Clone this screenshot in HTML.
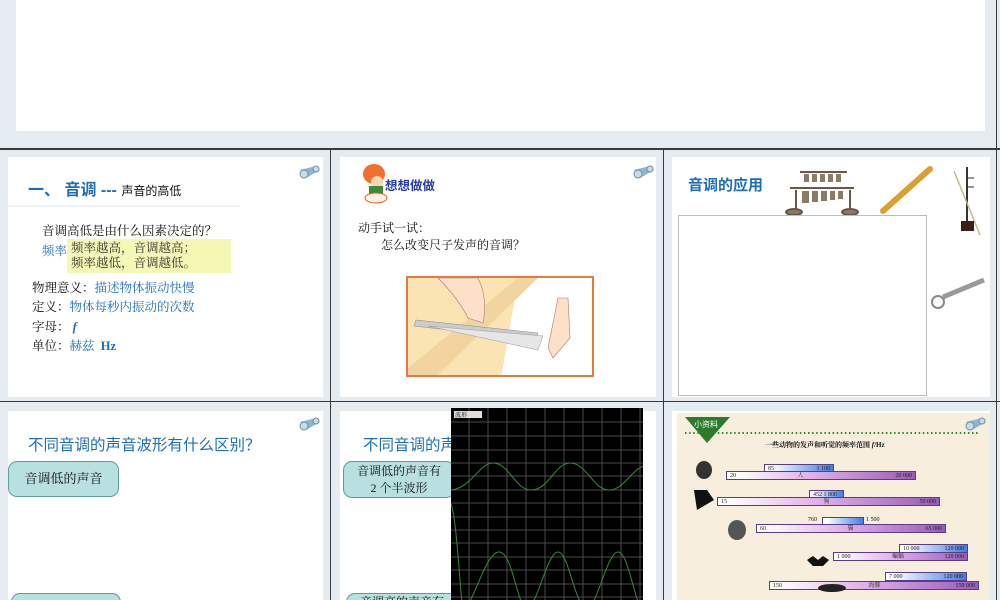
<!DOCTYPE html>
<html style="width:1000px;height:600px;overflow:hidden"><head><meta charset="utf-8"><style>
*{margin:0;padding:0;box-sizing:border-box}
body{width:1000px;height:600px;overflow:hidden;background:#e4ebf1;position:relative;font-family:"Liberation Serif","Noto Serif CJK SC",serif;color:#111}
.a{position:absolute}
.w{position:absolute;background:#fff}
.ln{position:absolute;background:#3a3a3a}
.b{color:#1e6fb8}
.s{font-family:"Liberation Sans","Noto Sans CJK SC",sans-serif}
.box{position:absolute;background:#b9e0e1;border:1px solid #5d9b9d;border-radius:9px;font-size:13px;text-align:center;color:#111}
.bar{position:absolute;height:9px;border:1px solid #5a3a8a;font-size:6px;line-height:8px;color:#222;padding:0 3px}
.p{background:linear-gradient(90deg,#fff 5%,#e6b8ee 40%,#9a5ab8)}
.q{background:linear-gradient(90deg,#fff 10%,#3d7fe0)}
#clip{position:absolute;left:0;top:0;width:1000px;height:600px;overflow:hidden}
</style></head><body><div id="clip">
<div class="w" style="left:16px;top:0;width:969px;height:131px"></div>
<div class="ln" style="left:0;top:148px;width:1000px;height:2px"></div>
<div class="ln" style="left:996px;top:0;width:1px;height:148px"></div>
<div class="ln" style="left:330px;top:150px;width:1px;height:251px"></div>
<div class="ln" style="left:663px;top:150px;width:1px;height:251px"></div>
<div class="ln" style="left:996px;top:150px;width:1px;height:450px"></div>
<div class="ln" style="left:0;top:401px;width:1000px;height:1px"></div>
<div class="ln" style="left:330px;top:402px;width:1px;height:198px"></div>
<div class="ln" style="left:663px;top:402px;width:1px;height:198px"></div>

<div class="w" style="left:8px;top:157px;width:315px;height:240px"></div>
<div class="a" style="left:8px;top:205px;width:232px;height:2px;background:#eef3f8"></div>
<div class="a s b" style="left:28px;top:176px;font-size:16px;font-weight:bold;white-space:nowrap">一、 音调 --- <span style="color:#111;font-size:12px;font-weight:normal">声音的高低</span></div>
<div class="a" style="left:42px;top:221px;font-size:12.5px">音调高低是由什么因素决定的？</div>
<div class="a b" style="left:42px;top:241px;font-size:12.5px">频率</div>
<div class="a" style="left:67px;top:239px;width:164px;height:34px;background:#f5f7b4;font-size:12.5px;line-height:15px;padding:2px 4px;color:#333">频率越高，音调越高；<br>频率越低，音调越低。</div>
<div class="a" style="left:32px;top:279px;font-size:12.5px;line-height:19.3px">物理意义：<span class="b">描述物体振动快慢</span><br>定义：<span class="b">物体每秒内振动的次数</span><br>字母：<span class="b"><i><b>&nbsp;f</b></i></span><br>单位：<span class="b">赫兹 &nbsp;<b>Hz</b></span></div>

<div class="w" style="left:340px;top:157px;width:316px;height:240px"></div>
<svg class="a" style="left:362px;top:162px" width="30" height="42"><ellipse cx="12" cy="12" rx="11" ry="10" fill="#f07030"/><circle cx="15" cy="20" r="6" fill="#f3d6b0"/><rect x="7" y="24" width="14" height="10" fill="#3c8a3c"/><ellipse cx="14" cy="36" rx="11" ry="5" fill="#fff0e0" stroke="#e06030"/></svg>
<div class="a s" style="left:385px;top:175px;font-size:12.5px;font-weight:bold;color:#2a3aa8">想想做做</div>
<div class="a" style="left:358px;top:219px;font-size:12px">动手试一试：</div>
<div class="a" style="left:381px;top:236px;font-size:12px">怎么改变尺子发声的音调？</div>
<div class="a" style="left:406px;top:276px;width:188px;height:101px;border:2px solid #e47a42;background:linear-gradient(100deg,#fbe4b4 55%,#fff 55%);overflow:hidden">
<svg width="184" height="97"><polygon points="0,90 110,0 130,0 30,97 0,97" fill="#f1d4a0"/><polygon points="8,42 130,55 128,62 6,48" fill="#ccc" stroke="#888" stroke-width=".5"/><polygon points="20,48 135,58 130,72" fill="#e6e6e6" stroke="#999" stroke-width=".5"/><path d="M30 0 Q50 20 60 40 L75 45 Q80 20 70 0Z" fill="#fde0c8" stroke="#a77" stroke-width=".6"/><path d="M150 20 L160 20 L162 60 L145 80 L140 70 Z" fill="#fde0c8" stroke="#a77" stroke-width=".6"/></svg></div>

<div class="w" style="left:672px;top:157px;width:318px;height:240px"></div>
<div class="a s b" style="left:688px;top:174px;font-size:15px;font-weight:bold">音调的应用</div>
<svg class="a" style="left:782px;top:162px" width="80" height="55"><g stroke="#6a5848" stroke-width="2" fill="#8a7a66"><line x1="18" y1="10" x2="65" y2="10"/><line x1="8" y1="26" x2="72" y2="26"/><line x1="14" y1="28" x2="14" y2="48"/><line x1="68" y1="28" x2="68" y2="48"/><ellipse cx="12" cy="50" rx="8" ry="3"/><ellipse cx="68" cy="50" rx="8" ry="3"/></g><g fill="#8a7a66"><rect x="22" y="12" width="5" height="8"/><rect x="30" y="12" width="5" height="8"/><rect x="38" y="12" width="5" height="8"/><rect x="46" y="12" width="5" height="8"/><rect x="54" y="12" width="5" height="8"/><rect x="20" y="29" width="7" height="12"/><rect x="30" y="29" width="6" height="11"/><rect x="39" y="29" width="6" height="10"/><rect x="48" y="29" width="5" height="9"/><rect x="56" y="29" width="5" height="8"/></g></svg>
<svg class="a" style="left:878px;top:164px" width="58" height="52"><line x1="5" y1="47" x2="52" y2="5" stroke="#d9a030" stroke-width="6" stroke-linecap="round"/></svg>
<svg class="a" style="left:950px;top:163px" width="40" height="75"><line x1="17" y1="4" x2="17" y2="62" stroke="#333" stroke-width="2"/><line x1="4" y1="8" x2="30" y2="72" stroke="#c8b890" stroke-width="1.5"/><rect x="11" y="58" width="13" height="10" fill="#3a2018"/><line x1="17" y1="15" x2="24" y2="15" stroke="#333"/><line x1="17" y1="24" x2="24" y2="24" stroke="#333"/></svg>
<svg class="a" style="left:928px;top:272px" width="60" height="40"><line x1="15" y1="25" x2="56" y2="8" stroke="#999" stroke-width="5"/><circle cx="10" cy="30" r="6" fill="none" stroke="#888" stroke-width="2"/></svg>
<div class="a" style="left:678px;top:215px;width:249px;height:181px;border:1px solid #bbb;background:#fff"></div>

<div class="w" style="left:8px;top:411px;width:315px;height:189px"></div>
<div class="a s b" style="left:28px;top:433px;font-size:15.5px">不同音调的声音波形有什么区别？</div>
<div class="box" style="left:8px;top:461px;width:111px;height:36px;line-height:34px">音调低的声音</div>
<div class="box" style="left:11px;top:593px;width:110px;height:30px"></div>

<div class="w" style="left:340px;top:411px;width:316px;height:189px"></div>
<div class="a s b" style="left:363px;top:433px;font-size:15.5px;white-space:nowrap">不同音调的声</div>
<div class="box" style="left:343px;top:461px;width:112px;height:37px;font-size:12px;line-height:17px;padding-top:1px">音调低的声音有<br>2 个半波形</div>
<div class="box" style="left:346px;top:593px;width:112px;height:30px;font-size:12px;line-height:16px">音调高的声音有</div>
<svg class="a" style="left:451px;top:408px" width="192" height="192"><rect width="192" height="192" fill="#000"/>
<g stroke="#4a4a4a" stroke-width="1"><path d="M18 0V192M37 0V192M56 0V192M75 0V192M94 0V192M113 0V192M132 0V192M151 0V192M170 0V192M189 0V192"/><path d="M0 14H192M0 28H192M0 42H192M0 55H192M0 68H192M0 82H192M0 95H192M0 109H192M0 122H192M0 135H192M0 149H192M0 162H192M0 176H192M0 189H192"/></g>
<rect x="3" y="3" width="28" height="7" fill="#ddd"/><text x="4" y="9" font-size="6" fill="#000">波形</text>
<path d="M0 82 C20 80 28 56 41 55 C58 54 64 82 80 82 C98 82 104 55 119 55 C136 55 142 82 158 82 C172 82 178 65 192 58" fill="none" stroke="#3a8a3a" stroke-width="1"/>
<path d="M0 96 C6 110 10 200 12 200 M12 200 C22 200 34 144 48 144 C62 144 66 200 76 200 C86 200 96 144 107 144 C118 144 124 200 136 200 C146 200 156 144 167 144 C178 144 184 200 192 200" fill="none" stroke="#3a8a3a" stroke-width="1"/></svg>

<div class="w" style="left:672px;top:411px;width:318px;height:189px"></div>
<div class="a" style="left:677px;top:413px;width:313px;height:187px;background:#f7eedd"></div>
<svg class="a" style="left:680px;top:415px" width="305" height="30"><polygon points="5,2 50,2 27,28" fill="#2c7a2a"/><text x="14" y="12" font-size="8" fill="#fff" font-family="Noto Sans CJK SC">小资料</text><line x1="5" y1="18" x2="300" y2="18" stroke="#2c8a2a" stroke-width="2" stroke-dasharray="1.5 2.6"/></svg>
<div class="a" style="left:765px;top:440px;font-size:7px;font-weight:bold">一些动物的发声和听觉的频率范围 <i>f</i>/Hz</div>
<div class="bar q" style="left:764px;top:464px;width:70px">85 <span style="float:right">1 100</span></div>
<div class="bar p" style="left:726px;top:471px;width:190px">20 <span style="margin-left:60px">人</span><span style="float:right">20 000</span></div>
<div class="bar q" style="left:809px;top:490px;width:35px">452 1 800</div>
<div class="bar p" style="left:717px;top:497px;width:223px">15 <span style="margin-left:95px">狗</span><span style="float:right">50 000</span></div>
<div class="bar q" style="left:822px;top:517px;width:42px"></div>
<div class="a" style="left:808px;top:517px;font-size:6px">760</div><div class="a" style="left:866px;top:517px;font-size:6px">1 500</div>
<div class="bar p" style="left:756px;top:524px;width:190px">60 <span style="margin-left:80px">猫</span><span style="float:right">65 000</span></div>
<div class="bar q" style="left:899px;top:544px;width:69px">10 000<span style="float:right">120 000</span></div>
<div class="bar p" style="left:833px;top:552px;width:135px">1 000 <span style="margin-left:40px">蝙蝠</span><span style="float:right">120 000</span></div>
<div class="bar q" style="left:885px;top:572px;width:82px">7 000<span style="float:right">120 000</span></div>
<div class="bar p" style="left:769px;top:581px;width:210px">150 <span style="margin-left:85px">海豚</span><span style="float:right">150 000</span></div>
<svg class="a" style="left:692px;top:460px" width="160" height="140"><ellipse cx="12" cy="10" rx="8" ry="9" fill="#333"/><polygon points="2,30 15,30 22,40 5,50" fill="#111"/><ellipse cx="45" cy="70" rx="9" ry="10" fill="#555"/><path d="M115 100 l6 -4 5 4 5 -4 6 4 -6 6 -10 0z" fill="#111"/><ellipse cx="140" cy="128" rx="14" ry="4" fill="#222"/></svg>

<svg class="a" style="left:298px;top:164px" width="24" height="16"><path d="M2 6 L18 2 L22 6 L8 14 Z" fill="#8fb4cc"/><circle cx="6" cy="10" r="4" fill="#c8dce8" stroke="#6a90a8"/><circle cx="18" cy="5" r="3" fill="#c8dce8" stroke="#6a90a8"/></svg>
<svg class="a" style="left:632px;top:164px" width="24" height="16"><path d="M2 6 L18 2 L22 6 L8 14 Z" fill="#8fb4cc"/><circle cx="6" cy="10" r="4" fill="#c8dce8" stroke="#6a90a8"/><circle cx="18" cy="5" r="3" fill="#c8dce8" stroke="#6a90a8"/></svg>
<svg class="a" style="left:298px;top:416px" width="24" height="16"><path d="M2 6 L18 2 L22 6 L8 14 Z" fill="#8fb4cc"/><circle cx="6" cy="10" r="4" fill="#c8dce8" stroke="#6a90a8"/><circle cx="18" cy="5" r="3" fill="#c8dce8" stroke="#6a90a8"/></svg>
<svg class="a" style="left:964px;top:416px" width="24" height="16"><path d="M2 6 L18 2 L22 6 L8 14 Z" fill="#8fb4cc"/><circle cx="6" cy="10" r="4" fill="#c8dce8" stroke="#6a90a8"/><circle cx="18" cy="5" r="3" fill="#c8dce8" stroke="#6a90a8"/></svg>
</div></body></html>
